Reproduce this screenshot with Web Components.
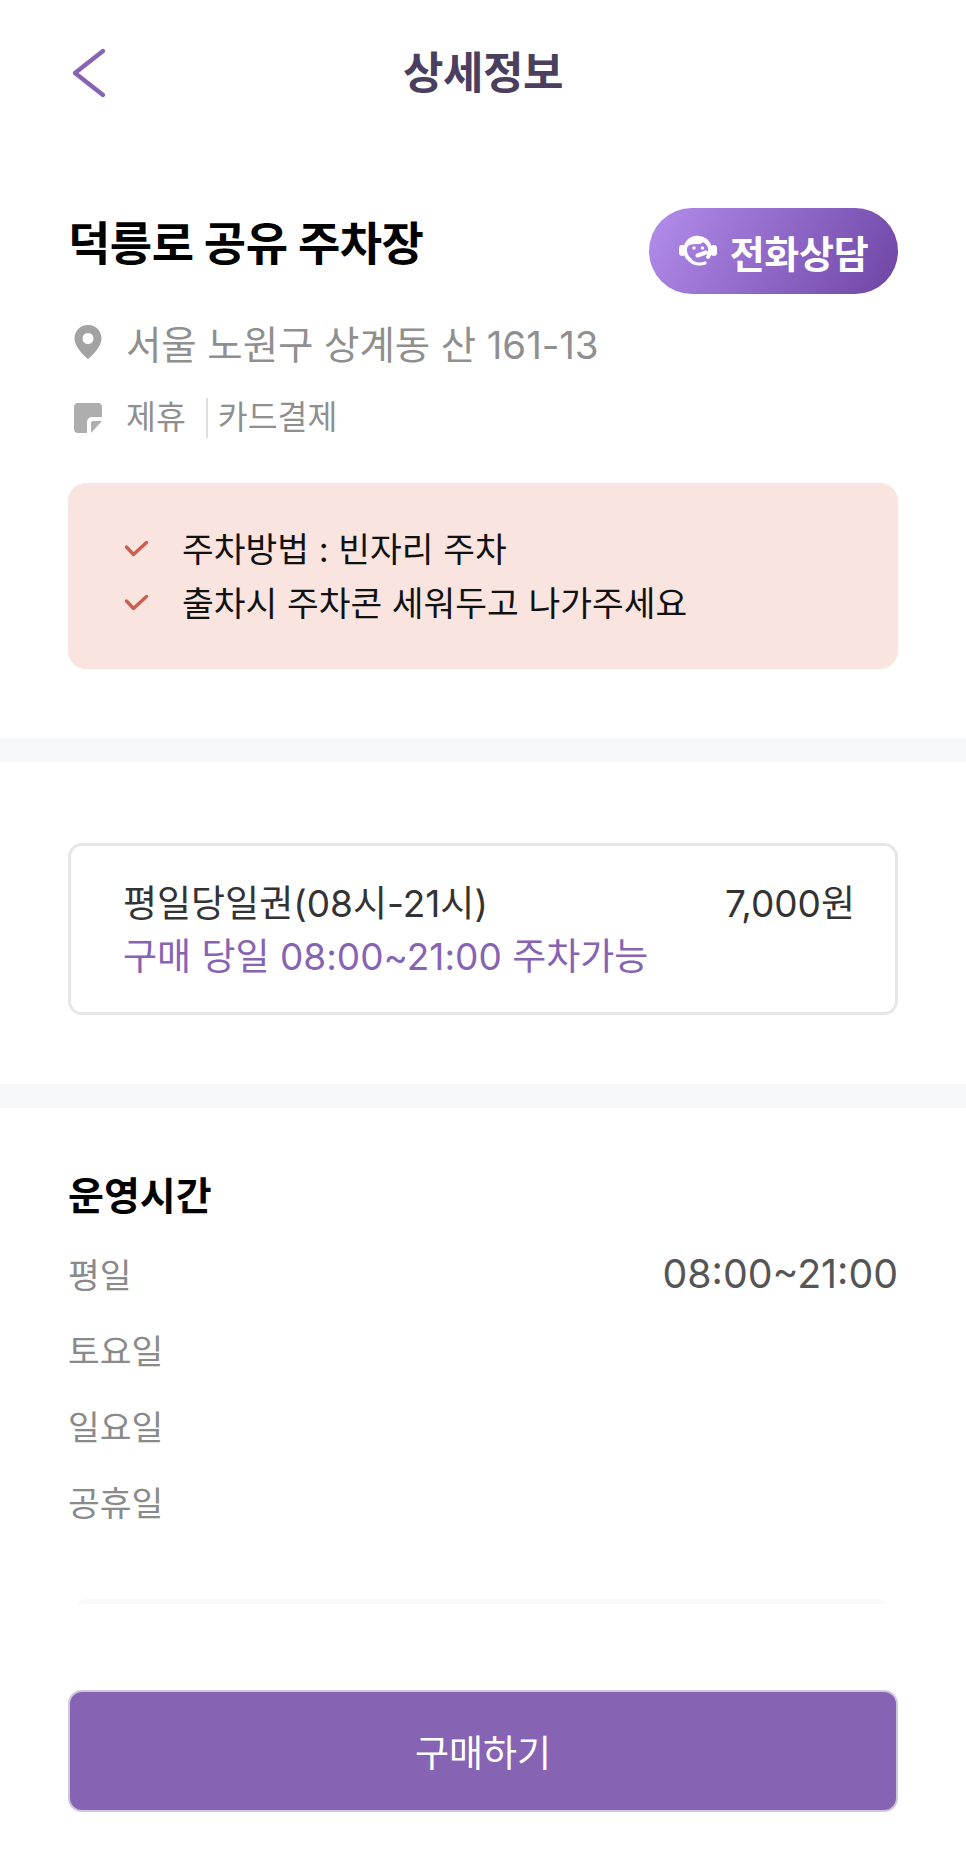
<!DOCTYPE html>
<html lang="ko">
<head>
<meta charset="utf-8">
<title>상세정보</title>
<style>
  html, body { margin: 0; padding: 0; background: #fff; }
  body {
    font-family: "Inter", "Noto Sans CJK KR", sans-serif;
    width: 966px;
    height: 1873px;
    overflow: hidden;
    display: flex;
    flex-direction: column;
  }
</style>
</head>
<body>
  <app-header>상세정보</app-header>
  <place-summary name="덕릉로 공유 주차장" address="서울 노원구 상계동 산 161-13">
    <span slot="tags">제휴</span>
    <span slot="tags">카드결제</span>
    <notice-box>
      <notice-item>주차방법 : 빈자리 주차</notice-item>
      <notice-item>출차시 주차콘 세워두고 나가주세요</notice-item>
    </notice-box>
  </place-summary>
  <section-gap></section-gap>
  <ticket-card price="7,000원" note="구매 당일 08:00~21:00 주차가능">평일당일권(08시-21시)</ticket-card>
  <section-gap></section-gap>
  <hours-table title="운영시간">
    <hours-row label="평일">08:00~21:00</hours-row>
    <hours-row label="토요일"></hours-row>
    <hours-row label="일요일"></hours-row>
    <hours-row label="공휴일"></hours-row>
  </hours-table>
  <buy-bar>구매하기</buy-bar>

<script>
class AppHeader extends HTMLElement {
  constructor() {
    super();
    this.shadowDOM = this.attachShadow({mode: "open"});
  }
  connectedCallback() {
    this.shadowDOM.innerHTML = `<style>
        :host {
          display: flex;
          align-items: center;
          justify-content: center;
          position: relative;
          height: 145px;
          padding-bottom: 5px;
          box-sizing: border-box;
        }
        svg { position: absolute; left: 70px; top: 47px; }
        h1 {
          margin: 0;
          font-size: 44px;
          font-weight: 700;
          color: #4a3f5f;
          letter-spacing: -0.5px;
        }
      </style>
      <svg width="38" height="52" viewBox="0 0 38 52" fill="none">
        <path d="M33 4 L5 26 L33 48" stroke="#8764b3" stroke-width="4.4" stroke-linecap="round" stroke-linejoin="round"/>
      </svg>
      <h1><slot></slot></h1>`;
  }
}

class PlaceSummary extends HTMLElement {
  constructor() {
    super();
    this.shadowDOM = this.attachShadow({mode: "open"});
  }
  connectedCallback() {
    this.shadowDOM.innerHTML = `<style>
        :host { display: block; padding: 63px 68px 0; height: 593px; box-sizing: border-box; }
        .top { display: flex; justify-content: space-between; align-items: flex-start; }
        h2 { margin: 0; font-size: 46px; line-height: 70px; font-weight: 700; color: #000; letter-spacing: -0.5px; }
        .call {
          display: flex; align-items: center; justify-content: center; gap: 13px;
          width: 249px; height: 86px; box-sizing: border-box;
          border-radius: 43px;
          background: linear-gradient(120deg, #b48eec 0%, #9068c8 50%, #6e45a3 100%);
          color: #fff; font-size: 38px; font-weight: 700; letter-spacing: -0.3px;
        }
        .addr { display: flex; align-items: center; gap: 23px; margin: 23px 0 0 5px; height: 50px;
          color: #8f8f8f; font-size: 38.500px; font-weight: 400; letter-spacing: -0.1px; }
        .tags { display: flex; align-items: center; gap: 23px; margin: 26px 0 0 5px; height: 50px;
          color: #8f8f8f; font-size: 32.500px; }
        .list { display: flex; align-items: center; }
        ::slotted(span[slot="tags"]) { padding-right: 20px; margin-right: 10px; border-right: 2px solid #dedede; line-height: 40px; }
        ::slotted(span[slot="tags"]:last-of-type) { border-right: 0; padding-right: 0; margin-right: 0; }
      </style>
      <div class="top">
        <h2>${this.getAttribute("name")}</h2>
        <div class="call">
          <svg width="38" height="32" viewBox="0 0 38 32" fill="none">
            <path d="M11 25 A12.500 12.500 0 1 1 29 22" stroke="#fff" stroke-width="3.800" stroke-linecap="round"/>
            <path d="M11 25 C14 29 21 30 26 28" stroke="#fff" stroke-width="3.200" stroke-linecap="round"/>
            <path fill="#fff" d="M8 12 C9 6 14 2 19 2 C25 2 30 6 31 12 C29 10 26 9 24 7 C22 9 20 9.500 18 9 C14 8.500 10 9.500 8 12 Z"/>
            <rect x="0" y="10" width="6.500" height="11" rx="3.250" fill="#fff"/>
            <rect x="31.500" y="10" width="6.500" height="11" rx="3.250" fill="#fff"/>
            <circle cx="15" cy="13" r="1.700" fill="#fff"/>
            <circle cx="23.500" cy="13" r="1.700" fill="#fff"/>
            <path d="M18.500 20.500 L27 17.500" stroke="#fff" stroke-width="4" stroke-linecap="round"/>
          </svg>
          <span>전화상담</span>
        </div>
      </div>
      <div class="addr">
        <svg width="30" height="36" viewBox="0 0 30 36">
          <path fill="#a3a3a3" fill-rule="evenodd" d="M15 1 C7 1 1.500 7 1.500 14.500 C1.500 22 9 30 15 35 C21 30 28.500 22 28.500 14.500 C28.500 7 23 1 15 1 Z M15 9 A5.500 5.500 0 1 1 15 20 A5.500 5.500 0 1 1 15 9 Z"/>
        </svg>
        <span>${this.getAttribute("address")}</span>
      </div>
      <div class="tags">
        <svg width="30" height="32" viewBox="0 0 30 32">
          <path fill="#aeaeae" d="M5 1 H25 A4 4 0 0 1 29 5 V15 H19 A5 5 0 0 0 14 20 V31 H5 A4 4 0 0 1 1 27 V5 A4 4 0 0 1 5 1 Z"/>
          <path fill="#aeaeae" d="M18 31 V21 A2 2 0 0 1 20 19 H29 Z"/>
        </svg>
        <div class="list"><slot name="tags"></slot></div>
      </div>
      <slot></slot>`;
  }
}

class NoticeBox extends HTMLElement {
  constructor() {
    super();
    this.attachShadow({mode: "open"}).innerHTML = `<style>
        :host {
          display: block;
          margin-top: 40px;
          padding: 37px 56px 0;
          height: 186px;
          box-sizing: border-box;
          background: #f9e4df;
          border-radius: 18px;
        }
      </style><slot></slot>`;
  }
}

class NoticeItem extends HTMLElement {
  constructor() {
    super();
    this.attachShadow({mode: "open"}).innerHTML = `<style>
        :host {
          display: flex;
          align-items: center;
          gap: 33px;
          height: 54px;
          font-size: 34.500px;
          color: #111;
        }
        svg { flex: none; margin-top: 4px; }
      </style>
      <svg width="25" height="18" viewBox="0 0 25 18" fill="none">
        <path d="M2.500 7 L9.500 14.500 L22.500 2.500" stroke="#cb6050" stroke-width="3.400" stroke-linecap="round" stroke-linejoin="round"/>
      </svg>
      <span><slot></slot></span>`;
  }
}

class SectionGap extends HTMLElement {
  constructor() {
    super();
    this.attachShadow({mode: "open"}).innerHTML = `<style>
        :host { display: block; height: 24px; background: #f7f8fa; flex: none; }
      </style>`;
  }
}

class TicketCard extends HTMLElement {
  constructor() {
    super();
    this.shadowDOM = this.attachShadow({mode: "open"});
  }
  connectedCallback() {
    this.shadowDOM.innerHTML = `<style>
        :host { display: block; padding: 81px 68px 69px; }
        .card {
          border: 3px solid #e6e7ea;
          border-radius: 14px;
          height: 172px;
          box-sizing: border-box;
          padding: 30px 40px 0 52px;
          font-size: 37px;
        }
        .row { display: flex; justify-content: space-between; line-height: 55px; color: #333; }
        .note { color: #8764b3; line-height: 52px; }
      </style>
      <div class="card">
        <div class="row"><span><slot></slot></span><span>${this.getAttribute("price")}</span></div>
        <div class="note">${this.getAttribute("note")}</div>
      </div>`;
  }
}

class HoursTable extends HTMLElement {
  constructor() {
    super();
    this.shadowDOM = this.attachShadow({mode: "open"});
  }
  connectedCallback() {
    this.shadowDOM.innerHTML = `<style>
        :host { display: block; padding: 64px 68px 0; flex: 1; position: relative; }
        h3 { margin: 0 0 15px; font-size: 39px; line-height: 48px; font-weight: 700; color: #000; }
        .peek {
          position: absolute; left: 75px; right: 76px; top: 491px; height: 12px;
          background: #f9f9fb; border-radius: 12px 12px 0 0;
        }
      </style>
      <h3>${this.getAttribute("title")}</h3>
      <slot></slot>
      <div class="peek"></div>`;
  }
}

class HoursRow extends HTMLElement {
  constructor() {
    super();
    this.shadowDOM = this.attachShadow({mode: "open"});
  }
  connectedCallback() {
    this.shadowDOM.innerHTML = `<style>
        :host {
          display: flex;
          justify-content: space-between;
          align-items: center;
          height: 76px;
          font-size: 34.500px;
          color: #8a8a8a;
        }
        .time { color: #555; font-size: 39.300px; }
      </style>
      <span>${this.getAttribute("label")}</span>
      <span class="time"><slot></slot></span>`;
  }
}

class BuyBar extends HTMLElement {
  constructor() {
    super();
    this.attachShadow({mode: "open"}).innerHTML = `<style>
        :host {
          display: block;
          flex: none;
          position: relative;
          background: #fff;
          padding: 86px 68px 61px;
        }
        button {
          display: block;
          width: 100%;
          height: 122px;
          box-sizing: border-box;
          border: 2px solid #cfc8dc;
          border-radius: 14px;
          background: #8764b3;
          color: #fff;
          font: inherit;
          font-size: 37px;
        }
      </style>
      <button type="button"><slot></slot></button>`;
  }
}

customElements.define("app-header", AppHeader);
customElements.define("place-summary", PlaceSummary);
customElements.define("notice-box", NoticeBox);
customElements.define("notice-item", NoticeItem);
customElements.define("section-gap", SectionGap);
customElements.define("ticket-card", TicketCard);
customElements.define("hours-table", HoursTable);
customElements.define("hours-row", HoursRow);
customElements.define("buy-bar", BuyBar);
</script>
</body>
</html>
